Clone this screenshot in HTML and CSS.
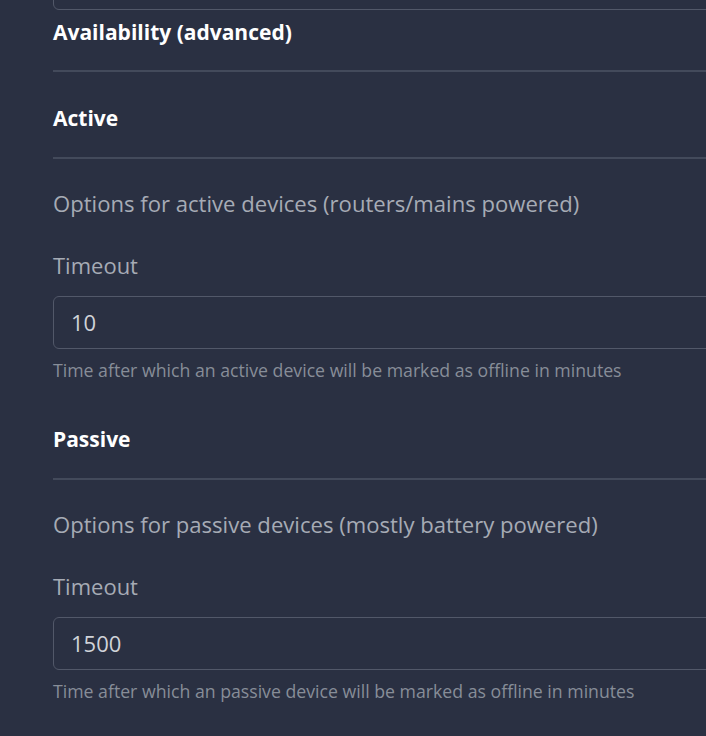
FILE: index.html
```html
<!DOCTYPE html>
<html lang="en">
<head>
  <meta charset="UTF-8" />
  <meta name="viewport" content="width=device-width, initial-scale=1.0"/>
  <title>Settings - Availability</title>
  <link rel="stylesheet" href="styles.css">
</head>
<body>

  <div class="settings">
    <input type="text" class="form-input top-input" value="" />

    <h5 class="section-title">Availability (advanced)</h5>
    <div class="divider section-divider"></div>

    <div class="group">
      <h6 class="group-title">Active</h6>
      <div class="divider"></div>
      <p class="group-desc">Options for active devices (routers/mains powered)</p>
      <label class="field-label" for="active-timeout">Timeout</label>
      <input type="number" id="active-timeout" class="form-input" value="10" />
      <div class="field-help">Time after which an active device will be marked as offline in minutes</div>
    </div>

    <div class="group">
      <h6 class="group-title">Passive</h6>
      <div class="divider"></div>
      <p class="group-desc">Options for passive devices (mostly battery powered)</p>
      <label class="field-label" for="passive-timeout">Timeout</label>
      <input type="number" id="passive-timeout" class="form-input" value="1500" />
      <div class="field-help">Time after which an passive device will be marked as offline in minutes</div>
    </div>
  </div>

</body>
</html>
```
FILE: styles.css
```css
body {
  margin: 0;
  overflow: hidden;
  background-color: #2a3042;
  font-family: "Open Sans", Arial, sans-serif;
  color: #a6abb5;
}
.settings {
  width: 780px;
  padding-left: 53px;
}
.form-input {
  display: block;
  box-sizing: border-box;
  width: 100%;
  height: 52.5px;
  margin: 0;
  padding: 0 17px;
  font-family: inherit;
  font-size: 22px;
  color: #d0d3d9;
  background-color: #2a3042;
  border: 1px solid #525869;
  border-radius: 6px;
  outline: none;
  -moz-appearance: textfield;
}
.form-input::-webkit-inner-spin-button,
.form-input::-webkit-outer-spin-button {
  -webkit-appearance: none;
  margin: 0;
}
.top-input {
  margin-top: -42.5px;
}
.section-title,
.group-title {
  margin: 0;
  font-size: 21px;
  line-height: 26px;
  font-weight: 700;
  color: #ffffff;
}
.section-title {
  margin-top: 9px;
}
.divider {
  height: 2px;
  margin-top: 26px;
  background-color: #434a5b;
}
.section-divider {
  margin-top: 25px;
}
.group-title {
  margin-top: 33px;
}
.group + .group .group-title {
  margin-top: 44.5px;
}
.group-desc {
  margin: 29px 0 0;
  font-size: 22.1px;
  line-height: 30px;
}
.field-label {
  display: block;
  margin-top: 32px;
  margin-bottom: 16px;
  font-size: 22px;
  line-height: 30px;
}
.field-help {
  margin-top: 9px;
  font-size: 17.7px;
  line-height: 24px;
  color: #878d98;
}
```
